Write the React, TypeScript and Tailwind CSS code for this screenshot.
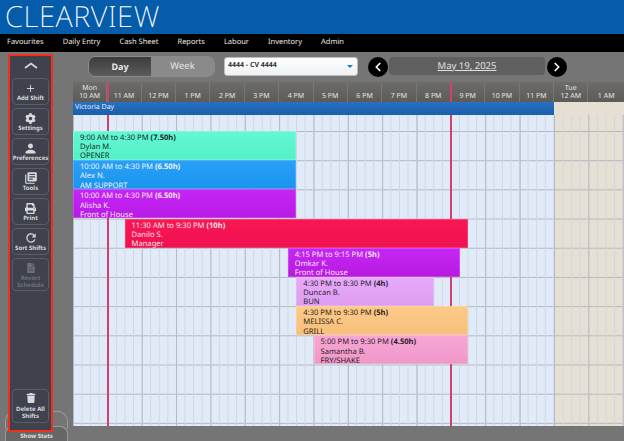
import React from "react";
import { FaCog, FaPrint, FaTrash, FaFileAlt } from "react-icons/fa";
import { MdPerson, MdLibraryBooks, MdRefresh } from "react-icons/md";
import { ChevronLeft, ChevronRight, Plus } from "lucide-react";

const HOUR = 34.36;
const hours = ["11 AM", "12 PM", "1 PM", "2 PM", "3 PM", "4 PM", "5 PM", "6 PM", "7 PM", "8 PM", "9 PM", "10 PM", "11 PM"];

const shifts = [
  { s: 10, e: 16.5, t: "9:00 AM to 4:30 PM", h: "(7.50h)", n: "Dylan M.", r: "OPENER", c: "bg-[linear-gradient(#62f8d6,#55f0c4)] text-[#1b2a28]" },
  { s: 10, e: 16.5, t: "10:00 AM to 4:30 PM", h: "(6.50h)", n: "Alex N.", r: "AM SUPPORT", c: "bg-[linear-gradient(#2aa0f8,#1a94ee)] text-[#eef4fa]" },
  { s: 10, e: 16.5, t: "10:00 AM to 4:30 PM", h: "(6.50h)", n: "Alisha K.", r: "Front of House", c: "bg-[linear-gradient(#c526f5,#b81ae6)] text-[#f3e6f8]" },
  { s: 11.5, e: 21.5, t: "11:30 AM to 9:30 PM", h: "(10h)", n: "Danilo S.", r: "Manager", c: "bg-[linear-gradient(#fb1655,#ee1150)] text-[#fbe6ea]" },
  { s: 16.25, e: 21.25, t: "4:15 PM to 9:15 PM", h: "(5h)", n: "Omkar K.", r: "Front of House", c: "bg-[linear-gradient(#c526f5,#b81ae0)] text-[#f3e6f8]" },
  { s: 16.5, e: 20.5, t: "4:30 PM to 8:30 PM", h: "(4h)", n: "Duncan B.", r: "BUN", c: "bg-[linear-gradient(#e8aafc,#dd9cef)] text-[#2a1f30]" },
  { s: 16.5, e: 21.5, t: "4:30 PM to 9:30 PM", h: "(5h)", n: "MELISSA C.", r: "GRILL", c: "bg-[linear-gradient(#fdca88,#f6bf7c)] text-[#2d2418]" },
  { s: 17, e: 21.5, t: "5:00 PM to 9:30 PM", h: "(4.50h)", n: "Samantha B.", r: "FRY/SHAKE", c: "bg-[linear-gradient(#f8a6d6,#ee98c8)] text-[#2d1d28]" },
];

const gridLines =
  "[background-image:linear-gradient(90deg,#b3bac4_1px,transparent_1px),linear-gradient(90deg,#d0d7e1_1px,transparent_1px),linear-gradient(0deg,transparent_28px,#b4b9c0_28px)] [background-size:34.36px_100%,8.59px_100%,100%_29.2px] [background-position:0_0,0_0,0_16px]";

function SideButton({ icon, label, dim, tall }: { icon: React.ReactNode; label: string; dim?: boolean; tall?: boolean }) {
  return (
    <div
      className={`flex w-[37px] flex-col items-center justify-center rounded-[4px] border border-[#5a5d66] text-center text-[6px] font-bold leading-[7px] ${
        tall ? "h-[33px]" : "h-[27px]"
      } ${dim ? "text-[#6d7078]" : "text-[#d8d9dc]"}`}
    >
      <div className="flex h-[14px] items-center justify-center">{icon}</div>
      <div>{label}</div>
    </div>
  );
}

export default function App() {
  return (
    <div className="relative flex h-[441px] w-[624px] flex-col overflow-hidden bg-[#757575] [font-family:'Liberation_Sans',Arial,sans-serif] [text-rendering:geometricPrecision]">
      <div className="flex h-[34px] items-center bg-[#045cab] pl-[5px] [font-family:'Lato','Inter',sans-serif] text-[29px] font-extralight leading-[34px] tracking-[0.6px] text-white">
        CLEARVIEW
      </div>
      <nav className="flex h-[18px] items-center gap-[19px] bg-black pl-[7px] text-[7.5px] text-[#e8e8e8]">
        <span>Favourites</span>
        <span>Daily Entry</span>
        <span>Cash Sheet</span>
        <span>Reports</span>
        <span>Labour</span>
        <span>Inventory</span>
        <span>Admin</span>
      </nav>

      <div className="flex min-h-0 flex-1">
        {/* sidebar */}
        <div className="z-20 mb-[9px] ml-2 mt-[2px] flex w-[45px] shrink-0 flex-col items-center gap-[3px] border-2 border-[#f0301c] bg-[#3f424c]">
          <div className="flex h-[19px] items-center justify-center text-[#d8d9dc]">
            <svg width="14" height="7" viewBox="0 0 14 7" fill="none" stroke="currentColor" strokeWidth="1.6">
              <polyline points="1,6 7,1.5 13,6" />
            </svg>
          </div>
          <SideButton icon={<Plus size={11} strokeWidth={2} />} label="Add Shift" />
          <SideButton icon={<FaCog size={11} />} label="Settings" />
          <SideButton icon={<MdPerson size={15} />} label="Preferences" />
          <SideButton icon={<MdLibraryBooks size={14} />} label="Tools" />
          <SideButton icon={<FaPrint size={11} />} label="Print" />
          <SideButton icon={<MdRefresh size={14} />} label="Sort Shifts" />
          <SideButton dim tall icon={<FaFileAlt size={10} />} label="Revert Schedule" />
          <div className="flex-1" />
          <div className="mb-[7px] flex h-[34px] w-[37px] flex-col items-center justify-center rounded-[4px] border border-[#5a5d66] text-center text-[6px] font-bold leading-[7px] text-[#d8d9dc]">
            <FaTrash size={10} className="mb-[3px]" />
            <div>Delete All</div>
            <div>Shifts</div>
          </div>
        </div>

        {/* main */}
        <div className="ml-[20px] flex min-w-0 flex-1 flex-col">
          {/* toolbar */}
          <div className="flex h-[30px] items-start pt-[4px]">
            <div className="ml-[15px] flex h-[21px] w-[127px] overflow-hidden rounded-[7px] border border-[#8a8a8a] text-[9px] font-bold">
              <div className="flex w-[62px] items-center justify-center bg-[linear-gradient(#3c3c3c,#5c5c5c)] text-[#e8e8e8]">Day</div>
              <div className="flex flex-1 items-center justify-center bg-[#8a8a8a] text-[9.5px] font-normal text-[#e4e4e4]">Week</div>
            </div>
            <div className="ml-[9px] mt-[1px] flex h-[19px] w-[134px] items-center justify-between rounded-[3px] border border-[#bdbdbd] bg-[linear-gradient(#ffffff,#eef0f3)] pl-[3px] pr-[4px] text-[7px] font-bold text-[#333]">
              <span>4444 - CV 4444</span>
              <span className="h-0 w-0 border-x-[3px] border-t-[3px] border-x-transparent border-t-[#1d7fc4]" />
            </div>
            <div className="ml-[10px] mt-[1px] flex h-[20px] w-[20px] items-center justify-center rounded-full bg-black text-white">
              <ChevronLeft size={14} strokeWidth={3} />
            </div>
            <div className="ml-[1px] mt-[1px] flex h-[18px] w-[156px] items-center justify-center rounded-[4px] bg-[#5f5f5f] text-[9.5px] text-[#e0e0e0] underline">
              May 19, 2025
            </div>
            <div className="ml-[2px] mt-[1px] flex h-[20px] w-[20px] items-center justify-center rounded-full bg-black text-white">
              <ChevronRight size={14} strokeWidth={3} />
            </div>
          </div>

          {/* hour header */}
          <div className="flex h-[20px] text-center text-[7px] leading-[8px] text-[#e4e4e4]">
            <div className="flex w-[34.36px] shrink-0 flex-col justify-end border-r border-[#777] bg-[linear-gradient(#6e6c68,#5c5b58)] pb-[1px]">
              <div>Mon</div>
              <div>10 AM</div>
            </div>
            {hours.map((h) => (
              <div key={h} className="flex w-[34.36px] shrink-0 flex-col justify-end border-r border-[#777] bg-[linear-gradient(#6e6c68,#5c5b58)] pb-[1px]">
                {h}
              </div>
            ))}
            <div className="flex w-[34.36px] shrink-0 flex-col justify-end border-r border-[#777] bg-[linear-gradient(#6e6c68,#5c5b58)] pb-[1px]">
              <div>Tue</div>
              <div>12 AM</div>
            </div>
            <div className="flex flex-1 flex-col justify-end bg-[linear-gradient(#6e6c68,#5c5b58)] pb-[1px]">1 AM</div>
          </div>

          {/* holiday row */}
          <div className="relative z-10 flex h-[13px]">
            <div className="flex w-[481px] shrink-0 items-center bg-[linear-gradient(#2a70c0,#1a5fae)] pl-[2px] text-[7px] text-[#e8eef6]">Victoria Day</div>
            <div className="flex-1 bg-[#e6dfd3]" />
          </div>

          {/* grid */}
          <div className="flex h-[311px]">
            <div className={`w-[481px] shrink-0 bg-[#e0eaf8] ${gridLines}`}>
              <div className="h-4" />
              {shifts.map((x) => (
                <div key={x.n} className="h-[29.2px]">
                  <div
                    className={`relative z-10 h-[29px] overflow-hidden pl-[7px] pt-[3px] text-[7.6px] leading-[9.2px] whitespace-nowrap shadow-[inset_0_0_0_1px_rgba(255,255,255,0.18)] ${x.c}`}
                    style={{ marginLeft: (x.s - 10) * HOUR, width: (x.e - x.s) * HOUR }}
                  >
                    <div>
                      {x.t} <b>{x.h}</b>
                    </div>
                    <div>{x.n}</div>
                    <div>{x.r}</div>
                  </div>
                </div>
              ))}
            </div>
            <div className={`flex-1 bg-[#e6dfd3] ${gridLines}`} />
          </div>
          <div className="flex-1" />
        </div>
      </div>

      {/* current-time markers, under the shifts */}
      <div className="absolute left-[107px] top-[82px] h-[344px] w-[1.5px] bg-[#d0406e]" />
      <div className="absolute left-[450px] top-[82px] h-[344px] w-[1.5px] bg-[#d0406e]" />

      {/* stat tabs behind the sidebar */}
      <div className="absolute bottom-[12px] left-[5px] h-[18px] w-[63px] rounded-t-[10px] border border-b-0 border-[#9a9a9a]" />
      <div className="absolute bottom-0 left-[5px] flex h-[15px] w-[63px] items-end justify-center rounded-t-[8px] border border-b-0 border-[#9a9a9a] bg-[#666] text-[6px] font-bold text-[#e0e0e0]">
        Show Stats
      </div>
    </div>
  );
}
